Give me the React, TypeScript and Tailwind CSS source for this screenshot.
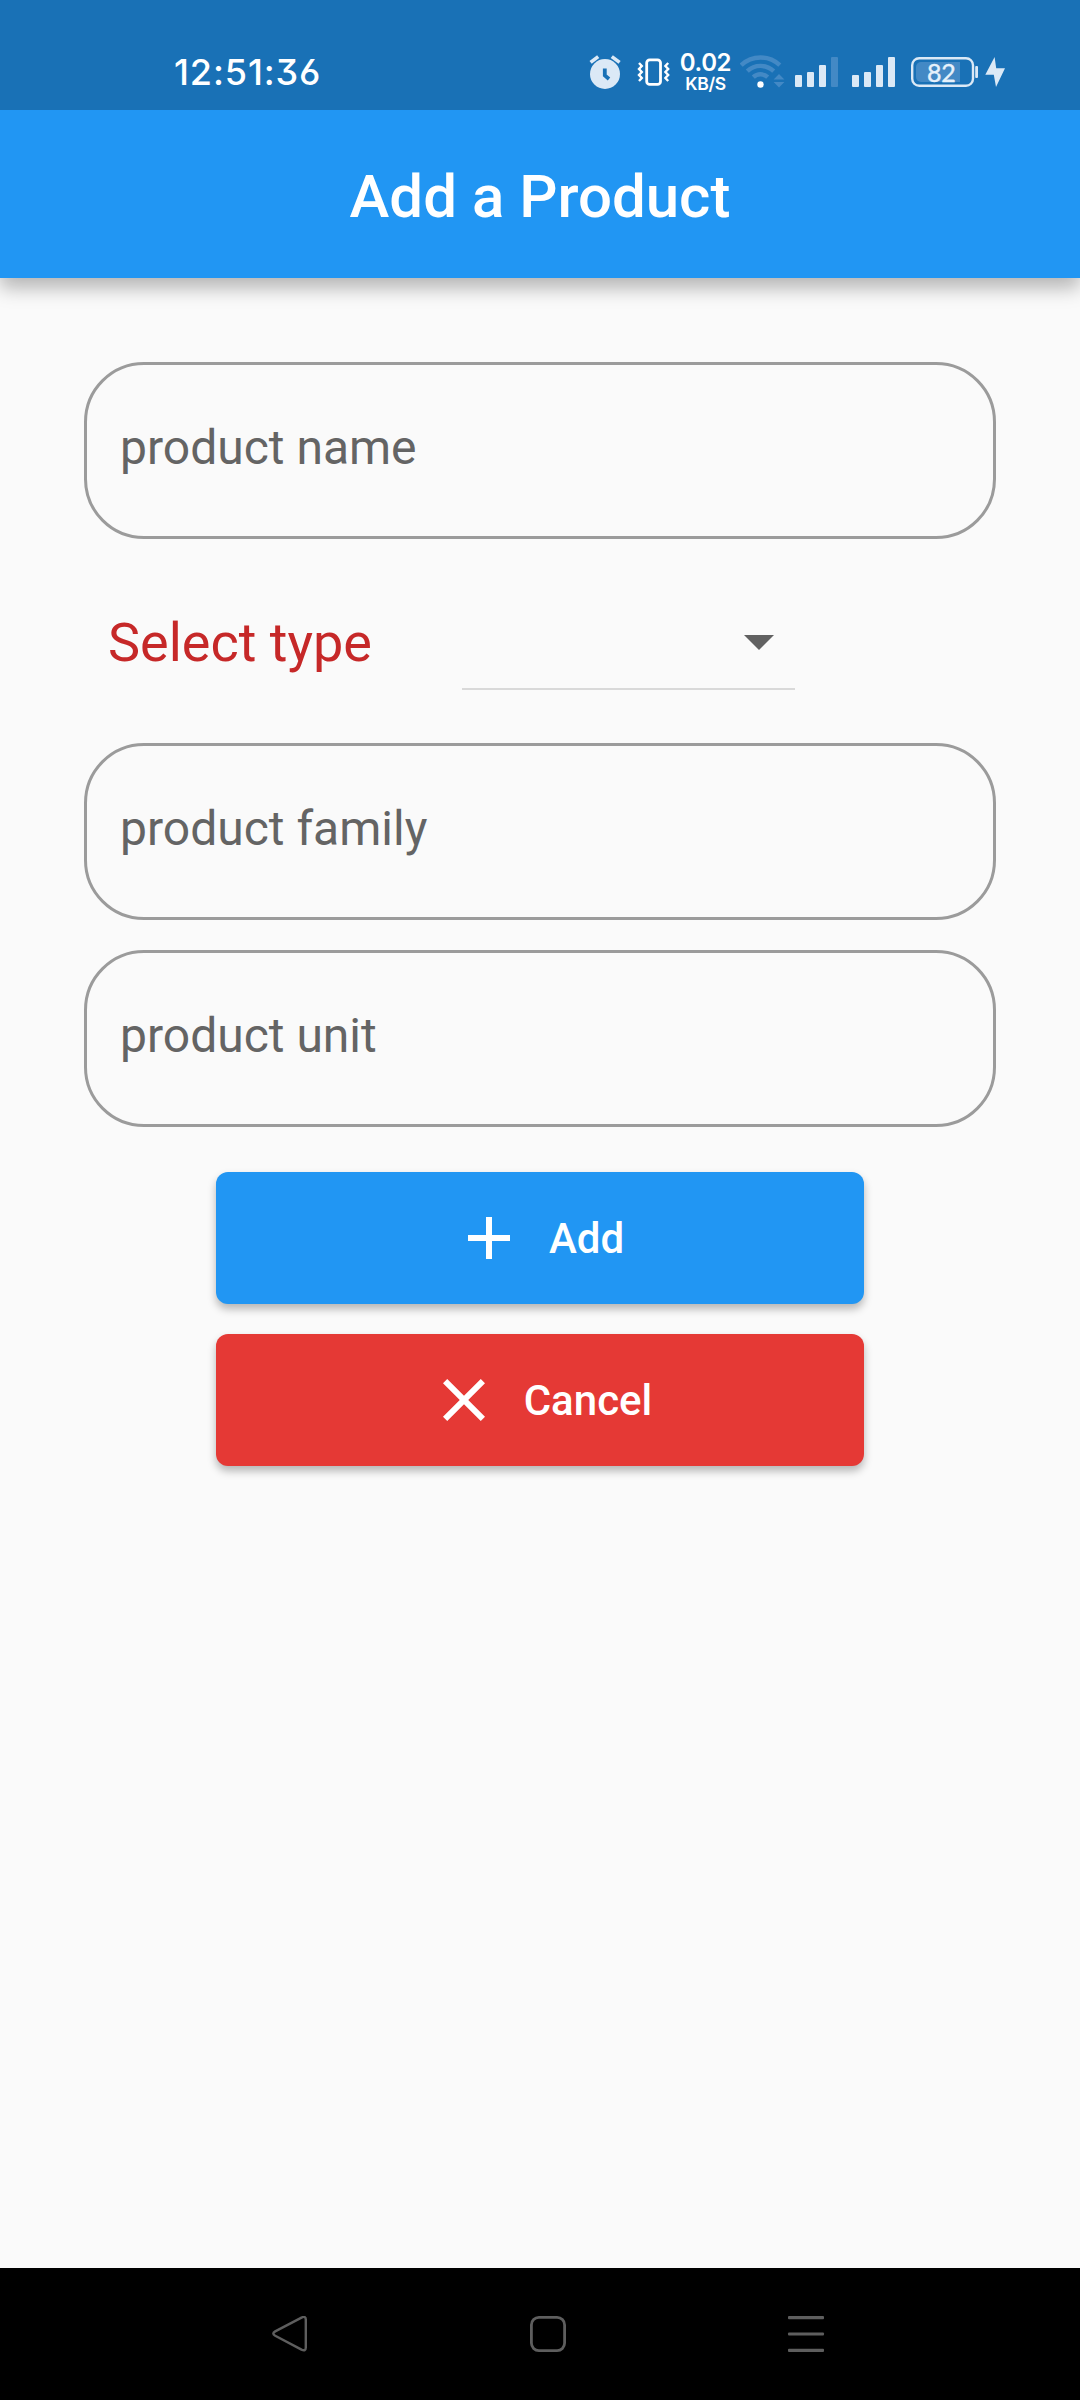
import React from "react";

const PALE = "#dbe9f6";
const DIM = "#4389c5";

function AlarmIcon() {
  return (
    <svg className="ml-[268px] h-10 w-[34px] shrink-0" viewBox="588 50 34 40" fill="none">
      <circle cx="605" cy="74" r="15" fill={PALE} />
      <path d="M590.6 62.4 598.2 56.6M611.8 56.6 619.6 62.4" stroke={PALE} strokeWidth="3.6" />
      <path d="M604.8 68.5V75.4L609 79" stroke="#1971b6" strokeWidth="3.8" />
    </svg>
  );
}

function VibrateIcon() {
  return (
    <svg className="ml-[15px] h-10 w-[34px] shrink-0" viewBox="637 50 34 40" fill="none" stroke="#fff">
      <rect x="646.7" y="59.8" width="13.8" height="24.6" rx="3" strokeWidth="2.8" />
      <path d="M639 63 641.8 66 639 69 641.8 72 639 75 641.8 78 639 81M668.2 63 665.4 66 668.2 69 665.4 72 668.2 75 665.4 78 668.2 81" strokeWidth="2.4" />
    </svg>
  );
}

function WifiIcon() {
  return (
    <svg className="ml-2 h-10 w-[46px] shrink-0" viewBox="740 50 46 40" fill="none">
      <g stroke={DIM} strokeWidth="4.4">
        <path d="M741.2 65.2A28 28 0 0 1 779.8 65.2" />
        <path d="M747.3 71.2A19 19 0 0 1 773.7 71.2" />
        <path d="M753.3 77.2A10.4 10.4 0 0 1 767.7 77.2" />
      </g>
      <circle cx="760.5" cy="84.5" r="3.2" fill="#fff" />
      <path d="M779 74 784.4 79.6H773.6ZM779 87.6 784.4 82H773.6Z" fill={DIM} />
    </svg>
  );
}

function Signal({ full = false }: { full?: boolean }) {
  return (
    <svg className="h-10 w-[43px] shrink-0" viewBox="0 50 43 40" fill={PALE}>
      <rect x="0" y="75" width="7" height="12" rx="1" />
      <rect x="12" y="72" width="7" height="15" rx="1" />
      <rect x="24" y="65" width="7" height="22" rx="1" />
      <rect x="36" y="57" width="7" height="30" rx="1" fill={full ? PALE : DIM} />
    </svg>
  );
}

function Battery() {
  return (
    <div className="relative ml-4 h-10 w-[68px] shrink-0">
      <svg className="h-10 w-[68px]" viewBox="911 50 68 40" fill="none">
        <path d="M921 62H960V82H921A5 5 0 0 1 916 77V67A5 5 0 0 1 921 62Z" fill={DIM} />
        <rect x="912.2" y="58.2" width="60.8" height="27.6" rx="7" stroke={PALE} strokeWidth="2.4" />
        <rect x="975.2" y="66" width="2.8" height="12" rx="1" fill={PALE} />
      </svg>
      <span className="absolute top-[7px] left-[16px] font-['Lato',sans-serif] text-[25px] leading-[30px] tracking-[-0.3px] text-[#e6f1fb] [-webkit-text-stroke:0.4px_#e6f1fb]">
        82
      </span>
    </div>
  );
}

function StatusBar() {
  return (
    <div className="relative z-10 flex h-[110px] shrink-0 items-start bg-[#1971b6] pt-[50px] pl-[174px] text-white">
      <span className="-mt-0.5 h-10 w-[146px] shrink-0 font-['Inter',sans-serif] text-[36px] leading-[48px] font-medium tracking-[0.9px] whitespace-nowrap [font-feature-settings:'cv09','ss01']">
        12:51:36
      </span>
      <AlarmIcon />
      <VibrateIcon />
      <div className="ml-2 flex w-[53px] shrink-0 flex-col items-center pt-px font-['Inter',sans-serif] whitespace-nowrap">
        <span className="text-[24px] leading-[24px] font-semibold tracking-[-0.4px]">0.02</span>
        <span className="mt-0.5 text-[17.5px] leading-[14px] font-semibold tracking-[-0.3px]">KB/S</span>
      </div>
      <WifiIcon />
      <div className="ml-[9px] flex gap-[14px]">
        <Signal />
        <Signal full />
      </div>
      <Battery />
      <svg className="ml-[6px] h-10 w-[21px] shrink-0" viewBox="985 50 21 40" fill={PALE}>
        <path d="M994.6 57 985.3 74.8H993.8L996 87 1005 68.2H996.2L994.6 57Z" />
      </svg>
    </div>
  );
}

function Field({ label }: { label: string }) {
  return (
    <input
      type="text"
      aria-label={label}
      placeholder={label}
      className="block h-[177px] w-full rounded-[60px] border-[3px] border-[#9b9b9b] bg-transparent px-[33px] pb-[6px] text-[48px] text-[#646464] outline-none placeholder:text-[#646464]"
    />
  );
}

function ActionButton({ label, color, children }: { label: string; color: string; children: React.ReactNode }) {
  return (
    <button
      type="button"
      className={`flex h-[132px] w-[648px] items-center justify-center gap-6 rounded-[12px] text-[42px] font-medium text-white shadow-[0_5px_8px_0_rgba(0,0,0,0.28)] ${color}`}
    >
      <svg className="size-[72px]" viewBox="0 0 24 24" fill="currentColor">
        {children}
      </svg>
      <span>{label}</span>
    </button>
  );
}

export default function App() {
  return (
    <div className="flex h-[2400px] w-[1080px] flex-col overflow-hidden bg-[#fafafa] font-['Roboto',sans-serif]">
      <StatusBar />
      <header className="flex h-[168px] items-center justify-center bg-[#2196f3] pt-[5px] shadow-[0_10px_18px_0_rgba(0,0,0,0.28)]">
        <h1 className="text-[60px] leading-[70px] font-medium whitespace-nowrap text-white">Add a Product</h1>
      </header>

      <main className="flex flex-1 flex-col px-[84px] pt-[84px]">
        <Field label="product name" />
        <div className="flex h-[204px] pl-6">
          <span className="w-[354px] pt-[72px] text-[54px] leading-[64px] whitespace-nowrap text-[#c62828]">
            Select type
          </span>
          <div className="flex h-[151px] w-[333px] items-start justify-end border-b-2 border-[#d9d9d9] pt-[66px]">
            <svg className="size-[72px]" viewBox="0 0 24 24" fill="#616161">
              <path d="M7 10l5 5 5-5z" />
            </svg>
          </div>
        </div>
        <div className="flex flex-col gap-[30px]">
          <Field label="product family" />
          <Field label="product unit" />
        </div>
        <div className="mt-[45px] flex flex-col items-center gap-[30px]">
          <ActionButton label="Add" color="bg-[#2196f3] pr-[3px]">
            <path d="M19 13h-6v6h-2v-6H5v-2h6V5h2v6h6v2z" />
          </ActionButton>
          <ActionButton label="Cancel" color="bg-[#e53935]">
            <path d="M19 6.41L17.59 5 12 10.59 6.41 5 5 6.41 10.59 12 5 17.59 6.41 19 12 13.41 17.59 19 19 17.59 13.41 12z" />
          </ActionButton>
        </div>
      </main>

      <nav className="flex h-[132px] items-start bg-black pt-12">
        <svg className="ml-[270px] h-9 w-10" viewBox="270 2316 40 36" fill="none" stroke="#5e5e5e" strokeWidth="2.4" strokeLinejoin="round">
          <path d="M301.5 2317.6Q305.8 2315.6 305.8 2319.6V2347.6Q305.8 2351.6 301.5 2349.6L275.2 2335.8Q271.4 2333.6 275.2 2331.4Z" />
        </svg>
        <svg className="ml-[218px] h-9 w-10" viewBox="528 2316 40 36" fill="none" stroke="#5e5e5e" strokeWidth="2.8">
          <rect x="531.4" y="2317.4" width="33.2" height="33.2" rx="7.5" />
        </svg>
        <svg className="ml-[218px] h-9 w-10" viewBox="786 2316 40 36" fill="#5e5e5e">
          <rect x="788" y="2316" width="36" height="3.2" rx="1" />
          <rect x="788" y="2332.4" width="36" height="3.2" rx="1" />
          <rect x="788" y="2348.8" width="36" height="3.2" rx="1" />
        </svg>
      </nav>
    </div>
  );
}
